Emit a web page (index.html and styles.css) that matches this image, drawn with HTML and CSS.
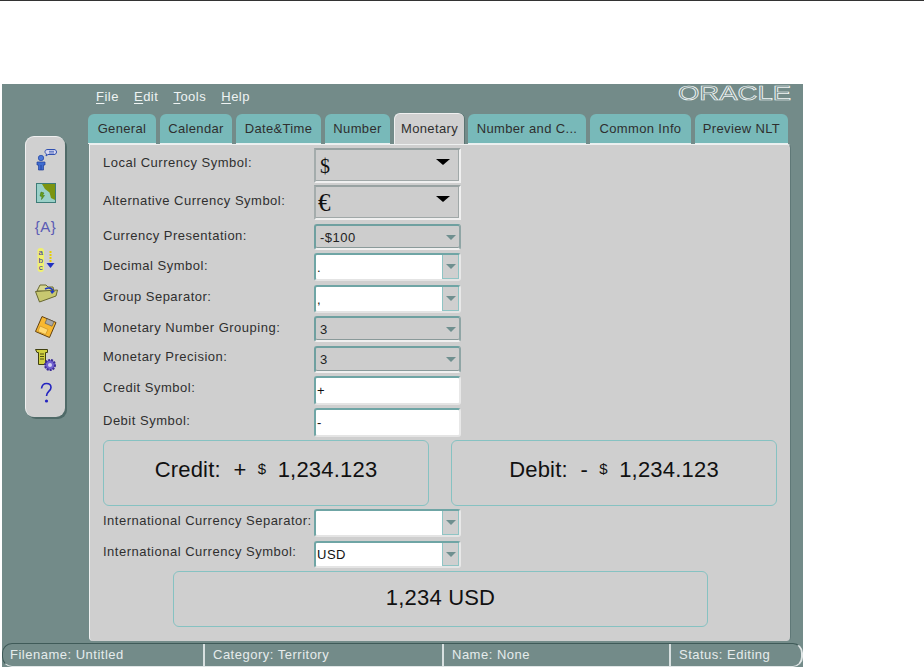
FILE: index.html
```html
<!DOCTYPE html>
<html lang="en">
<head>
<meta charset="utf-8">
<title>Locale Builder</title>
<link rel="stylesheet" href="styles.css">
</head>
<body>
<div class="topline"></div>
<div class="app">
  <div class="workspace">
    <aside class="toolbar">
      <div class="tool"><svg width="24" height="24" viewBox="0 0 24 24"><path d="M11 3.500C11 2 12.500 1.500 14 1.500h6c1.500 0 2.500 1 2.500 2.500s-1 2.500-2.500 2.500h-6l-2 1.500.5-2C11.500 5.500 11 5 11 3.500z" fill="#d8d8f0" stroke="#3050b0"/><path d="M15 3.300h5M15 5h5" stroke="#3050b0" stroke-width=".8"/><circle cx="7" cy="10" r="2.700" fill="#4c78d8" stroke="#2040a0" stroke-width=".7"/><path d="M3 14h8v3H9.500v5h-5v-5H3z" fill="#3f6cd0" stroke="#203c98" stroke-width=".7"/><path d="M7 17v5" stroke="#203c98" stroke-width=".8"/></svg></div>
      <div class="tool"><svg width="24" height="24" viewBox="0 0 24 24"><rect x="2.500" y="2.500" width="19" height="19" fill="#9ad0c8" stroke="#3e7c78"/><path d="M8 3h13v16l-4-2-1.500-5.500L11 8z" fill="#7c9410"/><path d="M7 11l3 1-1.500 2 2 .5-3 4 .5-3-2-.5z" fill="#68a018" stroke="#3e6c10" stroke-width=".5"/></svg></div>
      <div class="tool tool-text">{A}</div>
      <div class="tool"><svg width="24" height="24" viewBox="0 0 24 24"><rect x="3.500" y="0" width="6.500" height="24" rx="3" fill="#f0f070"/><text x="6.800" y="7" class="abc">a</text><text x="6.800" y="14.500" class="abc">b</text><text x="6.800" y="22" class="abc">c</text><path d="M16.500 3v13" stroke="#e8d000" stroke-width="2" stroke-dasharray="2 1"/><path d="M12.500 15h8l-4 5z" fill="#2030c0"/></svg></div>
      <div class="tool"><svg width="24" height="24" viewBox="0 0 24 24"><path d="M3 10l3-6h6l2 2h5l1 5z" fill="#d8d890" stroke="#686830"/><path d="M1.500 10.500l4 10.500L22 15l1.500-6L8 10z" fill="#c8c870" stroke="#686830"/><path d="M11 8c4-2 7-1 8 2" fill="none" stroke="#2038c0" stroke-width="1.600"/><path d="M16 10h5l-3 3z" fill="#2038c0"/></svg></div>
      <div class="tool"><svg width="24" height="24" viewBox="0 0 24 24"><path d="M8 1.500l14 6-6.500 15L1.500 16.500z" fill="#f8b830" stroke="#604010"/><path d="M13 3.700l7 3-2 4.500-7-3z" fill="#a8a8a8" stroke="#505050" stroke-width=".6"/><path d="M6 11l8 3.500-2.500 5-7.500-3z" fill="#ffd870" stroke="#c08820" stroke-width=".6"/></svg></div>
      <div class="tool"><svg width="24" height="24" viewBox="0 0 24 24"><path d="M1.500 1.500h12v3h-2v12h-7v-12H3z" fill="#d0d040" stroke="#404010"/><path d="M6 6h4M6 8.500h4M6 11h4" stroke="#404010" stroke-width=".9"/><circle cx="16" cy="17" r="5" fill="#7060d0" stroke="#3c2c98" stroke-width="2" stroke-dasharray="2 1"/><circle cx="16" cy="17" r="2" fill="#d0d0f0"/></svg></div>
      <div class="tool"><svg width="24" height="24" viewBox="0 0 24 24"><path d="M7.500 7.500C8 4 10 2.500 12.500 2.500c3 0 4.500 2 4.500 4 0 3.500-4.500 4-4.500 8.500" fill="none" stroke="#2424c0" stroke-width="1.600"/><circle cx="12.500" cy="20" r="1.600" fill="#2424c0"/></svg></div>
    </aside>
    <main class="main">
      <div class="menu-row">
        <nav class="menu">
          <span><u>F</u>ile</span>
          <span><u>E</u>dit</span>
          <span><u>T</u>ools</span>
          <span><u>H</u>elp</span>
        </nav>
        <svg class="logo" width="116" height="26" viewBox="0 0 116 26"><text x="1" y="20" textLength="113" lengthAdjust="spacingAndGlyphs" class="logo-text">ORACLE</text></svg>
      </div>
      <div class="tabs">
        <div class="tab">General</div>
        <div class="tab">Calendar</div>
        <div class="tab">Date&amp;Time</div>
        <div class="tab">Number</div>
        <div class="tab tab-active">Monetary</div>
        <div class="tab">Number and C...</div>
        <div class="tab">Common Info</div>
        <div class="tab">Preview NLT</div>
      </div>
      <section class="panel">
        <div class="form">
          <div class="row"><label>Local Currency Symbol:</label><div class="ctl big"><span class="sym">$</span><i class="arrow-black"></i></div></div>
          <div class="row"><label>Alternative Currency Symbol:</label><div class="ctl big"><span class="sym sym-euro">€</span><i class="arrow-black"></i></div></div>
          <div class="row"><label>Currency Presentation:</label><div class="ctl combo h26"><span>-$100</span><i class="arrow"></i></div></div>
          <div class="row"><label>Decimal Symbol:</label><div class="ctl edit h28"><span class="val">.</span><b class="btn"><i class="arrow"></i></b></div></div>
          <div class="row"><label>Group Separator:</label><div class="ctl edit h28"><span class="val">,</span><b class="btn"><i class="arrow"></i></b></div></div>
          <div class="row"><label>Monetary Number Grouping:</label><div class="ctl combo h26"><span>3</span><i class="arrow"></i></div></div>
          <div class="row"><label>Monetary Precision:</label><div class="ctl combo h27"><span>3</span><i class="arrow"></i></div></div>
          <div class="row"><label>Credit Symbol:</label><div class="ctl text h29"><span class="val">+</span></div></div>
          <div class="row"><label>Debit Symbol:</label><div class="ctl text h29"><span class="val">-</span></div></div>
          <div class="row previews">
            <div class="preview">Credit:&nbsp; + <span class="small-sym">$</span> 1,234.123</div>
            <div class="preview">Debit:&nbsp; - <span class="small-sym">$</span> 1,234.123</div>
          </div>
          <div class="row"><label>International Currency Separator:</label><div class="ctl edit h28"><span class="val"></span><b class="btn"><i class="arrow"></i></b></div></div>
          <div class="row"><label>International Currency Symbol:</label><div class="ctl edit h27"><span class="val">USD</span><b class="btn"><i class="arrow"></i></b></div></div>
          <div class="row row-center"><div class="preview preview-wide">1,234 USD</div></div>
        </div>
      </section>
    </main>
  </div>
  <footer class="status">
    <div class="cell c1">Filename: Untitled</div>
    <div class="cell c2">Category: Territory</div>
    <div class="cell c3">Name: None</div>
    <div class="cell c4">Status: Editing</div>
  </footer>
</div>
</body>
</html>
```

FILE: styles.css
```css
* { box-sizing: border-box; }
html, body { margin: 0; padding: 0; background: #fff; }
body {
  height: 667px;
  overflow: hidden;
  font-family: "Liberation Sans", Arial, sans-serif;
  font-size: 13px;
  letter-spacing: .5px;
  color: #2f2f2f;
}
.topline { height: 1px; background: #333; margin-bottom: 83px; }
.app {
  width: 801px;
  height: 583px;
  margin-left: 2px;
  background: #738b89;
  display: flex;
  flex-direction: column;
}
.workspace { display: flex; height: 559px; }

.toolbar {
  width: 40px;
  height: 281px;
  margin: 52px 0 0 23px;
  padding-top: 6px;
  background: #d0d0d0;
  border-radius: 9px;
  border-top: 1px solid #f0f0f0;
  border-left: 1px solid #f0f0f0;
  box-shadow: 2px 2px 0 #4f6a68;
}
.tool {
  height: 33.4px;
  display: flex;
  align-items: center;
  justify-content: center;
}
.tool-text { font-size: 15px; letter-spacing: .5px; color: #5a5ab4; }
.abc { font-size: 8px; letter-spacing: 0; fill: #3030a0; text-anchor: middle; }

.main { margin-left: 23px; width: 703px; }
.menu-row {
  height: 29px;
  display: flex;
  justify-content: space-between;
  align-items: flex-start;
}
.menu {
  display: flex;
  gap: 15px;
  margin: 5px 0 0 8px;
  color: #eef3f3;
  line-height: 16px;
}
.menu u { text-underline-offset: 2px; }
.logo { display: block; flex: none; margin: -4px -2px 0 0; }
.logo-text {
  font-family: "Liberation Sans", Arial, sans-serif;
  font-size: 20px;
  letter-spacing: 0;
  fill: #738b89;
  stroke: #f2f6f6;
  stroke-width: .7;
}
.tabs {
  display: grid;
  grid-template-columns: 68px 72px 85px 65px 70px 118px 101px 93px;
  gap: 4px;
  height: 31px;
}
.tab {
  background: #78b9b9;
  border-radius: 6px 6px 0 0;
  display: flex;
  align-items: center;
  justify-content: center;
  white-space: nowrap;
  padding-bottom: 1px;
  margin-top: 1px;
  border-bottom: 1px solid #e8f0f0;
  letter-spacing: .35px;
}
.tab-active {
  background: #d0d0d0;
  margin-top: 0;
  border: 0;
  border-top: 1px solid #f0f0f0;
  border-left: 1px solid #f0f0f0;
  box-shadow: 1px 0 0 #5a7472;
  position: relative;
  z-index: 1;
}
.panel {
  width: 702px;
  height: 497px;
  margin-left: 1px;
  background: #cfcfcf;
  border-radius: 0 4px 4px 4px;
  border-left: 1px solid #eef0f0;
  border-top: 1px solid #eef0f0;
  border-right: 1px solid #5f7877;
  padding: 3px 0 0 13px;
}
.form {
  display: grid;
  grid-template-rows: 37px 39px 29px 32px 31px 30px 30px 32px 32px 69px 32px 30px 56px;
}
.row { display: flex; align-items: flex-start; }
.row label {
  width: 211px;
  flex: none;
  align-self: flex-start;
  line-height: 14px;
  white-space: nowrap;
}
.row:nth-child(1) label { margin-top: 8px; }
.row:nth-child(2) label { margin-top: 9px; }
.row:nth-child(3) label { margin-top: 5px; }
.row:nth-child(4) label { margin-top: 6px; }
.row:nth-child(5) label,
.row:nth-child(6) label { margin-top: 5px; }
.row:nth-child(7) label { margin-top: 4px; }
.row:nth-child(8) label { margin-top: 5px; }
.row:nth-child(9) label { margin-top: 6px; }
.row:nth-child(11) label { margin-top: 5px; }
.row:nth-child(12) label { margin-top: 4px; }

.ctl {
  width: 147px;
  display: flex;
  align-items: center;
  justify-content: space-between;
  flex: none;
}
.h26 { height: 26px; }
.h27 { height: 27px; }
.h28 { height: 28px; }
.h29 { height: 29px; }
.big {
  height: 35px;
  padding: 0 9px 0 4px;
  background: #cdcdcd;
  border: 2px solid;
  border-color: #98a2a2 #f0f0f0 #f0f0f0 #a4acac;
  box-shadow: inset -1px -1px 0 #a0a8a8;
}
.sym { font-family: "Liberation Serif", serif; font-size: 20px; letter-spacing: 0; color: #111; margin-top: 2px; }
.sym-euro { font-size: 25px; margin-left: -2px; margin-top: 0; }
.arrow-black {
  width: 0; height: 0;
  align-self: flex-start;
  margin-top: 9px;
  border-left: 7px solid transparent;
  border-right: 7px solid transparent;
  border-top: 6px solid #000;
}
.arrow {
  width: 0; height: 0;
  border-left: 5px solid transparent;
  border-right: 5px solid transparent;
  border-top: 5px solid #6f8f8f;
}
.combo {
  padding: 0 3px 0 4px;
  background: #cdcdcd;
  border: 2px solid;
  border-color: #6fa0a0 #8fa5a5 #f0f0f0 #6fa0a0;
  border-radius: 3px;
  box-shadow: inset 0 -1px 0 #8a9a9a;
  color: #222;
}
.text, .edit {
  background: #fff;
  border: 2px solid;
  border-color: #6fa5a5 #e8e8e8 #e4e4e4 #6fa5a5;
  border-radius: 3px;
  color: #111;
}
.val { padding-left: 1px; }
.text { justify-content: flex-start; }
.edit { padding: 0; }
.btn {
  width: 17px;
  height: 100%;
  flex: none;
  background: #cfcfcf;
  border-left: 1px solid #8fc4c4;
  border-right: 1px solid #8fc4c4;
  border-bottom: 1px solid #8fc4c4;
  display: flex;
  align-items: center;
  justify-content: center;
  font-weight: normal;
}
.previews { gap: 22px; }
.preview {
  width: 326px;
  height: 66px;
  border: 1px solid #86c2c2;
  border-radius: 6px;
  display: flex;
  align-items: center;
  justify-content: center;
  white-space: pre-wrap;
  font-size: 22px;
  letter-spacing: .2px;
  color: #111;
  padding-bottom: 6px;
}
.small-sym { font-size: 15px; margin: 0 5px; position: relative; top: -2px; }
.row-center { padding-left: 70px; }
.preview-wide { width: 535px; height: 56px; padding-bottom: 3px; }

.status {
  height: 24px;
  display: flex;
  color: #e6ecec;
  line-height: 22px;
  border-top: 1px solid #3f5a58;
  border-bottom: 1px solid #e0e6e6;
  border-radius: 10px;
  border-left: 1px solid #3f5a58;
  border-right: 2px solid #e0e6e6;
}
.cell { padding-left: 7px; border-right: 2px solid #d8e0e0; white-space: nowrap; }
.c1 { width: 202px; }
.c2 { width: 239px; padding-left: 8px; }
.c3 { width: 227px; padding-left: 8px; }
.c4 { flex: 1; border-right: 0; padding-left: 8px; }
```
